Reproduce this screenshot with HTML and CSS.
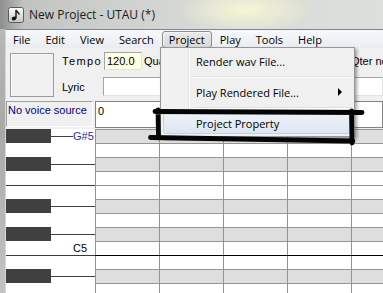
FILE: index.html
```html
<!DOCTYPE html>
<html lang="en">
<head>
    <meta charset="UTF-8">
    <meta name="viewport" content="width=device-width, initial-scale=1.0">
    <title>New Project - UTAU (*)</title>
    <link rel="stylesheet" href="styles.css">
</head>
<body>
    <div class="titlebar">
        <svg class="app-icon" width="16" height="16" viewBox="0 0 16 16">
            <defs>
                <linearGradient id="iconFill" x1="0" y1="0" x2="0" y2="1">
                    <stop offset="0" stop-color="#ffffff"/>
                    <stop offset="1" stop-color="#c4c4c4"/>
                </linearGradient>
            </defs>
            <rect x="0.5" y="0.5" width="15" height="15" rx="2" fill="url(#iconFill)" stroke="#5a5a5a"/>
            <ellipse cx="6" cy="11.5" rx="2.4" ry="1.8" transform="rotate(-20 6 11.5)" fill="#111"/>
            <path d="M8 11.3 V3 C8.6 4.8 11 5.4 11.2 7.6" fill="none" stroke="#111" stroke-width="1.4"/>
        </svg>
        <span class="title">New Project - UTAU (*)</span>
    </div>
    <div class="client">
        <div class="menubar">
            <span class="menu-item">File</span>
            <span class="menu-item">Edit</span>
            <span class="menu-item">View</span>
            <span class="menu-item">Search</span>
            <span class="menu-item open">Project</span>
            <span class="menu-item">Play</span>
            <span class="menu-item">Tools</span>
            <span class="menu-item">Help</span>
        </div>
        <div class="toolbar">
            <div class="preview"></div>
            <div class="fields">
                <div class="field-row">
                    <span class="field-label tempo-label">Tempo</span>
                    <div class="input tempo">120.0</div>
                    <span class="field-label quant">Quantize</span>
                    <span class="field-label">Qter note</span>
                </div>
                <div class="field-row lyric-row">
                    <span class="field-label">Lyric</span>
                    <div class="input lyric"></div>
                </div>
            </div>
        </div>
        <div class="voice-row">
            <div class="voice-name">No voice source</div>
            <div class="input note-edit">0</div>
        </div>
        <div class="roll">
            <div class="piano">
                <div class="key black"><span class="key-body"></span><span class="key-line"></span><span class="key-name current">G#5</span></div>
                <div class="key"></div>
                <div class="key black"><span class="key-body"></span><span class="key-line"></span></div>
                <div class="key"></div>
                <div class="key split"></div>
                <div class="key black"><span class="key-body"></span><span class="key-line"></span></div>
                <div class="key"></div>
                <div class="key black"><span class="key-body"></span><span class="key-line"></span></div>
                <div class="key"><span class="key-gap"></span><span class="key-name">C5</span></div>
                <div class="key split"></div>
                <div class="key black"><span class="key-body"></span><span class="key-line"></span></div>
                <div class="key"></div>
            </div>
            <div class="grid">
                <div class="grid-row shade"></div>
                <div class="grid-row"></div>
                <div class="grid-row shade"></div>
                <div class="grid-row"></div>
                <div class="grid-row"></div>
                <div class="grid-row shade"></div>
                <div class="grid-row"></div>
                <div class="grid-row shade"></div>
                <div class="grid-row"></div>
                <div class="grid-row octave"></div>
                <div class="grid-row shade"></div>
                <div class="grid-row"></div>
            </div>
        </div>
    </div>

    <div class="dropdown">
        <div class="drop-item">Render wav File...</div>
        <div class="drop-sep"></div>
        <div class="drop-item">Play Rendered File...<span class="submenu-arrow"></span></div>
        <div class="drop-sep"></div>
        <div class="drop-item hover">Project Property</div>
    </div>

    <!-- hand drawn highlight around the menu entry -->
    <svg class="markup" width="383" height="293" viewBox="0 0 383 293">
        <path d="M155 111.5 L362 112.5 M351.5 111 L352 143 M158 110 L158.5 138 M150.5 137.5 L353 141"
              fill="none" stroke="#050505" stroke-width="4.8" stroke-linecap="round"/>
    </svg>
</body>
</html>
```

FILE: styles.css
```css
body {
    margin: 0;
    width: 383px;
    height: 293px;
    overflow: hidden;
    position: relative;
    background: linear-gradient(to bottom, #b9bcb9, #a7aaa7 45%, #c2c4c1);
    font-family: "Liberation Sans", Arial, sans-serif;
    font-size: 11px;
    color: #000;
}
.titlebar {
    height: 29px;
    display: flex;
    align-items: center;
    padding-left: 8px;
    background:
        radial-gradient(ellipse 70px 24px at 245px 10px, rgba(248, 247, 212, 0.95), rgba(248, 247, 212, 0)),
        linear-gradient(to right, #8d8f8d, #c0c3c0 24px, #cdd0cd 110px, #d7dad6 210px, #dcdfdb);
}
.app-icon {
    margin-right: 5px;
}
.title {
    font-family: "Open Sans", sans-serif;
    font-size: 12px;
    color: #1c1c1c;
}
.client {
    margin-left: 5px;
    height: 264px;
    border-left: 1px solid #d5d8db;
    border-top: 1px solid #7d8793;
    background: #f0f0f0;
    display: flex;
    flex-direction: column;
}
.menubar {
    height: 18px;
    flex: none;
    display: flex;
    align-items: center;
    background: linear-gradient(#f7f8fa, #e9edf2);
    font-family: "Open Sans", sans-serif;
    font-size: 11px;
}
.menu-item {
    height: 15px;
    line-height: 15px;
    padding: 0 6px;
    margin-right: 1px;
    border: 1px solid transparent;
    border-radius: 3px;
}
.menu-item.open {
    border-color: #8c8c8c;
    background: linear-gradient(#eaeaea, #d9d9d9);
    box-shadow: inset 1px 1px 0 #f7f7f7;
}
.toolbar {
    height: 52px;
    flex: none;
    display: flex;
    padding: 4px 0 0 4px;
    box-sizing: border-box;
}
.preview {
    width: 42px;
    height: 42px;
    flex: none;
    margin-top: 1px;
    border: 1px solid #9b9b9b;
    box-shadow: inset 1px 1px 0 #fdfdfd;
}
.fields {
    flex: 1;
    min-width: 0;
    margin-left: 8px;
    display: flex;
    flex-direction: column;
    gap: 7px;
}
.field-row {
    display: flex;
    align-items: center;
    height: 18px;
}
.lyric-row {
    height: 19px;
}
.field-label {
    width: 41px;
    flex: none;
    overflow: hidden;
    white-space: nowrap;
}
.tempo-label {
    letter-spacing: 1.4px;
}
.field-label.quant {
    width: 207px;
    margin-left: 2px;
}
.input {
    height: 100%;
    box-sizing: border-box;
    border: 1px solid #a4a4a4;
    border-right-color: #e3e3e3;
    border-bottom-color: #e3e3e3;
    background: #fff;
    padding-left: 2px;
}
.tempo {
    width: 38px;
    flex: none;
    margin-left: 1px;
    background: #ffffe1;
    line-height: 16px;
}
.lyric {
    flex: 1;
}
.voice-row {
    height: 29px;
    flex: none;
    display: flex;
    padding-top: 1px;
    box-sizing: border-box;
}
.voice-name {
    width: 87px;
    height: 26px;
    flex: none;
    box-sizing: border-box;
    border: 1px solid #a0a0a0;
    border-right-color: #fff;
    border-bottom-color: #fff;
    color: #00007f;
    line-height: 16px;
    padding-left: 1px;
}
.note-edit {
    flex: 1;
    height: 27px;
    margin-left: 2px;
    line-height: 18px;
    border-color: #828282;
}
.roll {
    flex: 1;
    display: flex;
    overflow: hidden;
}
.piano {
    width: 89px;
    flex: none;
    background: #fff;
}
.key {
    height: 14px;
    display: flex;
    box-sizing: border-box;
}
.key.split {
    border-top: 1px solid #3a3a3a;
}
.key-body {
    width: 45px;
    background: #404040;
}
.key-line {
    flex: 1;
    background: linear-gradient(transparent 7px, #404040 7px 8px, transparent 8px);
}
.key-gap {
    width: 67px;
}
.key-name {
    width: 22px;
    line-height: 14px;
}
.key-name.current {
    color: #2a2aa8;
}
.grid {
    flex: 1;
}
.grid-row {
    height: 14px;
    box-sizing: border-box;
    border-top: 1px solid #959595;
    background:
        linear-gradient(to right, #d266d8 0 1px, transparent 1px) 0 0 / 256px 100% repeat-x,
        linear-gradient(to right, #8b8bd4 0 1px, transparent 1px) 0 0 / 64px 100% repeat-x,
        #fff;
    background-origin: border-box;
}
.grid-row.shade {
    background-color: #dedede;
}
.grid-row.octave {
    border-top-color: #000;
}
.dropdown {
    position: absolute;
    left: 160px;
    top: 47px;
    width: 189px;
    padding: 2px;
    border: 1px solid #979797;
    background: linear-gradient(to right, #f1f1f1 0 27px, #e2e3e3 27px 28px, #fff 28px 29px, #f0f0f0 29px);
    box-shadow: 2px 2px 3px rgba(0, 0, 0, 0.35);
    font-family: "Open Sans", sans-serif;
    font-size: 11px;
}
.drop-item {
    height: 22px;
    display: flex;
    align-items: center;
    padding-left: 33px;
    box-sizing: border-box;
}
.drop-item.hover {
    margin-right: 1px;
    padding-left: 32px;
    border: 1px solid #c3d1e2;
    border-radius: 3px;
    background: linear-gradient(#eef3f9, #dde6f0);
}
.submenu-arrow {
    margin-left: auto;
    margin-right: 10px;
    border-left: 4px solid #000;
    border-top: 4px solid transparent;
    border-bottom: 4px solid transparent;
}
.drop-sep {
    height: 9px;
    margin-left: 30px;
    background: linear-gradient(transparent 4px, #e0e0e0 4px 5px, #fff 5px 6px, transparent 6px);
}
.markup {
    position: absolute;
    left: 0;
    top: 0;
}
```
